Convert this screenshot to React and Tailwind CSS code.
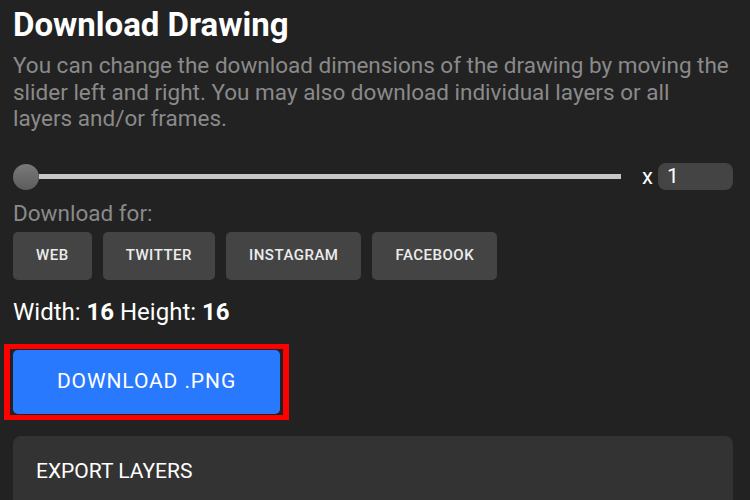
const presets = ['Web', 'Twitter', 'Instagram', 'Facebook'];

const App = () => {
  return (
    <div className="h-[500px] bg-[#222222] pl-[13px] pr-[17px] pt-[6px] font-['Roboto',sans-serif] overflow-hidden">
      <h1 className="text-[33px] font-bold leading-[38px] text-white">Download Drawing</h1>
      <p className="mt-[8px] text-[22.5px] leading-[26.5px] text-[#8a8a8a]">
        You can change the download dimensions of the drawing by moving the slider left and right. You may also download individual layers or all layers and/or frames.
      </p>

      <div className="mt-[31px] flex h-[28px] items-center">
        <div className="flex flex-1 items-center">
          <div className="h-[26px] w-[26px] shrink-0 rounded-full bg-gradient-to-b from-[#7a7a7a] to-[#5c5c5c]" />
          <div className="h-[5px] flex-1 bg-[#c6c6c6]" />
        </div>
        <span className="ml-[21px] text-[22px] leading-none text-white">x</span>
        <div className="ml-[5px] flex h-[27px] w-[75px] items-center rounded-lg bg-[#444444] pl-[9px] text-[21px] text-white">
          1
        </div>
      </div>

      <div className="mt-[9px] text-[22.5px] leading-[26px] text-[#8a8a8a]">Download for:</div>
      <div className="mt-[6px] flex gap-[11px]">
        {presets.map((p) => (
          <button
            key={p}
            className="h-[48px] rounded-[5px] bg-[#444444] px-[23px] text-[15px] font-medium uppercase tracking-[0.5px] text-[#ececec]"
          >
            {p}
          </button>
        ))}
      </div>

      <div className="mt-[18px] text-[24px] leading-[28px] text-white">
        Width: <span className="font-bold">16</span> Height: <span className="font-bold">16</span>
      </div>

      <div className="-ml-[9px] mt-[18px] w-fit border-x-[6px] border-y-[5px] border-[#ff0000] px-[3px] py-[1px]">
        <button className="h-[64px] w-[267px] rounded-[5px] bg-[#2979ff] text-[21px] uppercase tracking-[0.9px] text-white">
          Download .png
        </button>
      </div>

      <div className="mt-[16px] h-[100px] rounded-t-lg bg-[#333333] px-[23px] pt-[23px]">
        <div className="text-[21px] leading-[24px] text-white">EXPORT LAYERS</div>
      </div>
    </div>
  );
};

export default App;
